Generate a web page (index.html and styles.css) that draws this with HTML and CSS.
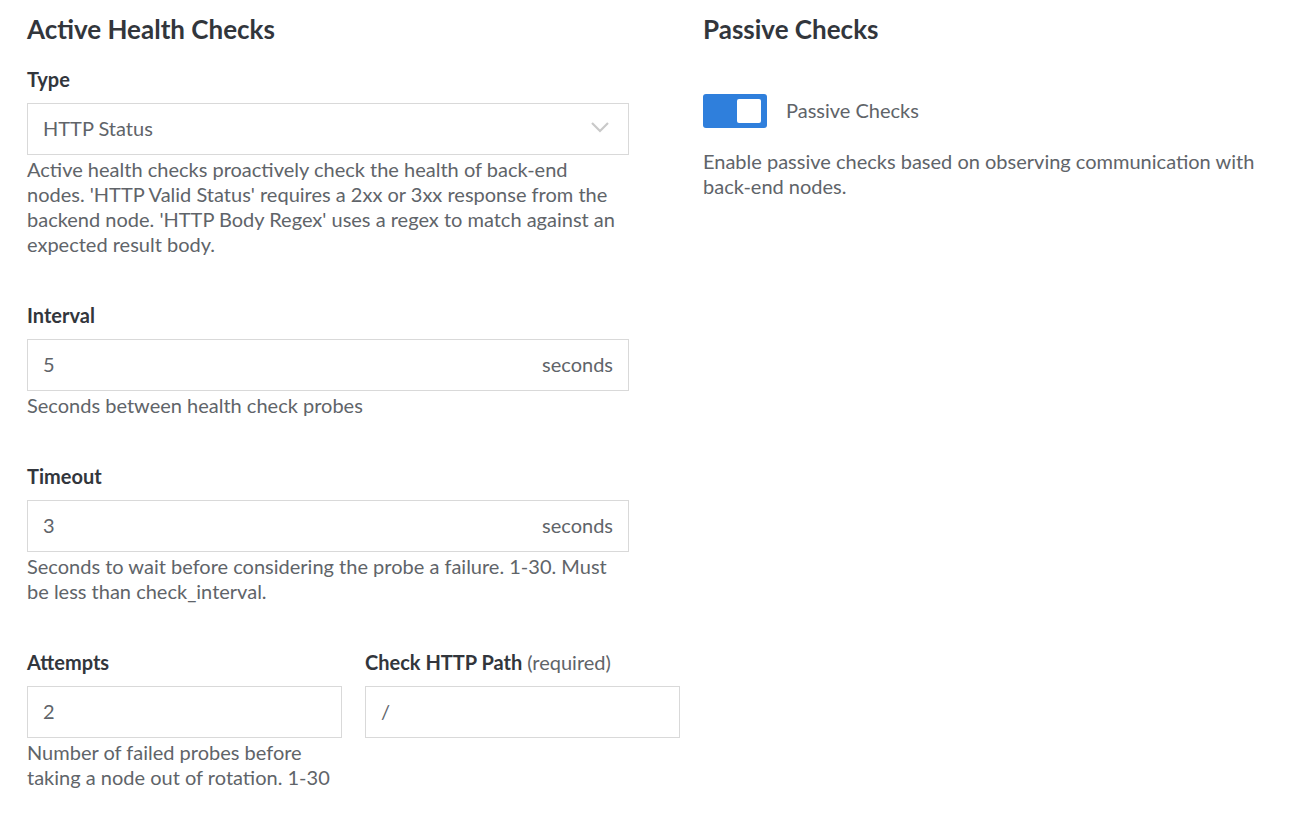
FILE: index.html
```html
<!DOCTYPE html>
<html lang="en">
<head>
<meta charset="utf-8">
<title>Health Checks</title>
<link rel="stylesheet" href="styles.css">
</head>
<body>
<div class="page">
  <section class="col col-left">
    <h2 class="title">Active Health Checks</h2>

    <div class="field">
      <label class="label">Type</label>
      <div class="input select">
        <span class="value">HTTP Status</span>
        <svg class="chevron" width="20" height="12" viewBox="0 0 20 12"><path d="M2 2 L10 10 L18 2" fill="none" stroke="#c9c9c9" stroke-width="2.2"/></svg>
      </div>
      <p class="help">Active health checks proactively check the health of back-end nodes. 'HTTP Valid Status' requires a 2xx or 3xx response from the backend node. 'HTTP Body Regex' uses a regex to match against an expected result body.</p>
    </div>

    <div class="field">
      <label class="label">Interval</label>
      <div class="input">
        <span class="value">5</span>
        <span class="suffix">seconds</span>
      </div>
      <p class="help">Seconds between health check probes</p>
    </div>

    <div class="field">
      <label class="label">Timeout</label>
      <div class="input">
        <span class="value">3</span>
        <span class="suffix">seconds</span>
      </div>
      <p class="help">Seconds to wait before considering the probe a failure. 1-30. Must be less than check_interval.</p>
    </div>

    <div class="field-row">
      <div class="field">
        <label class="label">Attempts</label>
        <div class="input">
          <span class="value">2</span>
        </div>
        <p class="help">Number of failed probes before taking a node out of rotation. 1-30</p>
      </div>
      <div class="field">
        <label class="label">Check HTTP Path <span class="req">(required)</span></label>
        <div class="input">
          <span class="value">/</span>
        </div>
      </div>
    </div>
  </section>

  <section class="col col-right">
    <h2 class="title">Passive Checks</h2>
    <div class="toggle-row">
      <span class="toggle"><span class="knob"></span></span>
      <span class="toggle-label">Passive Checks</span>
    </div>
    <p class="help help-right">Enable passive checks based on observing communication with back-end nodes.</p>
  </section>
</div>
</body>
</html>
```

FILE: styles.css
```css
* { box-sizing: border-box; }

html, body {
  margin: 0;
  padding: 0;
  background: #ffffff;
}

body {
  font-family: Lato, "Liberation Sans", sans-serif;
  color: #606469;
  font-size: 20px;
}

.page {
  display: flex;
  gap: 74px;
  padding: 14px 0 0 27px;
}

.col-left {
  width: 602px;
  flex: none;
}

.col-right {
  width: 567px;
  flex: none;
}

.title {
  margin: 0;
  font-size: 26px;
  line-height: 30px;
  font-weight: 700;
  color: #32363c;
}

.field {
  margin-top: 23px;
}

.col-left > .field + .field,
.col-left > .field + .field-row {
  margin-top: 46px;
}

.label {
  display: block;
  font-size: 20px;
  line-height: 25px;
  font-weight: 700;
  color: #32363c;
  margin-bottom: 11px;
}

.req {
  font-weight: 400;
  color: #606469;
}

.input {
  display: flex;
  align-items: center;
  justify-content: space-between;
  height: 52px;
  border: 1px solid #d9d9d9;
  padding: 0 15px 3px;
  background: #fff;
  color: #606469;
  font-size: 20px;
}

.chevron {
  margin-right: 3px;
  margin-top: -2px;
}

.suffix {
  color: #606469;
}

.help {
  margin: 2px 0 0;
  font-size: 20px;
  line-height: 25px;
  color: #606469;
}

.field-row {
  display: grid;
  grid-template-columns: 315px 315px;
  column-gap: 23px;
  width: 653px;
}

.field-row .field {
  margin-top: 0;
}

.toggle-row {
  display: flex;
  align-items: center;
  gap: 19px;
  margin-top: 50px;
}

.toggle {
  display: flex;
  justify-content: flex-end;
  align-items: center;
  width: 64px;
  height: 34px;
  padding-right: 6px;
  background: #2f7fdc;
  border-radius: 3px;
}

.knob {
  width: 24px;
  height: 24px;
  background: #ffffff;
  border-radius: 2px;
}

.toggle-label {
  font-size: 20px;
  color: #606469;
  margin-top: -3px;
}

.help-right {
  margin-top: 21px;
}
```
